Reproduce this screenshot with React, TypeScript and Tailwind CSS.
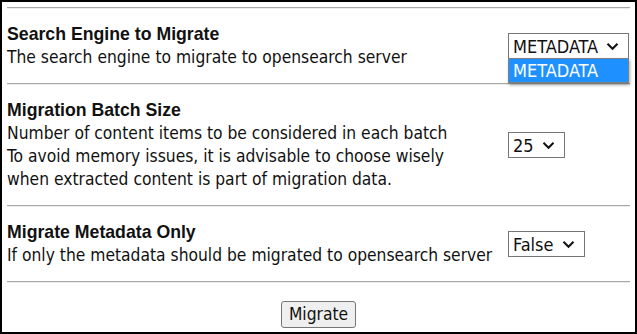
import React from 'react';

const body = "font-['DejaVu_Sans_Condensed','DejaVu_Sans',sans-serif]";
const head = "font-['Liberation_Sans',Arial,sans-serif]";

function Rule() {
  return <div className="h-[2px] border-t border-[#a8a8a8] border-b border-b-[#ececec]" />;
}

function Chevron() {
  return (
    <svg width="13" height="9" viewBox="0 0 13 9" className="ml-[8px] shrink-0">
      <path d="M1.5 1.8 L6.5 6.8 L11.5 1.8" fill="none" stroke="#111" strokeWidth="2" />
    </svg>
  );
}

function FakeSelect({ value, open }: { value: string; open?: boolean }) {
  return (
    <div className="relative inline-block">
      <div className={`flex items-center h-[26px] border border-[#767676] bg-white pl-[4px] pr-[9px] text-[18px] text-[#111] ${body}`}>
        <span>{value}</span>
        <Chevron />
      </div>
      {open && (
        <div className="absolute left-0 right-0 top-[25px] border border-[#808080] bg-white shadow-[1px_2px_3px_rgba(0,0,0,0.35)]">
          <div className={`h-[23px] leading-[23px] bg-[#1e90ff] text-white pl-[4px] text-[18px] ${body}`}>{value}</div>
        </div>
      )}
    </div>
  );
}

function Row({ title, lines, control }: { title: string; lines: string[]; control: React.ReactNode }) {
  return (
    <div className="grid grid-cols-[501px_1fr] items-center py-[14px]">
      <div className="leading-[23px] text-[#111]">
        <div className={`${head} font-bold text-[17.7px]`}>{title}</div>
        {lines.map((l) => (
          <div key={l} className={`${body} text-[17.3px]`}>{l}</div>
        ))}
      </div>
      <div>{control}</div>
    </div>
  );
}

export default function App() {
  return (
    <div className="w-[637px] h-[334px] bg-white border-2 border-black px-[5px] pt-[5px] overflow-hidden">
      <Rule />
      <div className="relative z-10">
        <Row
          title="Search Engine to Migrate"
          lines={['The search engine to migrate to opensearch server']}
          control={<FakeSelect value="METADATA" open />}
        />
      </div>
      <Rule />
      <Row
        title="Migration Batch Size"
        lines={[
          'Number of content items to be considered in each batch',
          'To avoid memory issues, it is advisable to choose wisely',
          'when extracted content is part of migration data.',
        ]}
        control={<FakeSelect value="25" />}
      />
      <Rule />
      <Row
        title="Migrate Metadata Only"
        lines={['If only the metadata should be migrated to opensearch server']}
        control={<FakeSelect value="False" />}
      />
      <Rule />
      <div className="flex justify-center pt-[18px]">
        <button className={`h-[27px] px-[7px] rounded-[3px] border border-[#767676] bg-[#efefef] text-[17.3px] text-[#111] ${body}`}>
          Migrate
        </button>
      </div>
    </div>
  );
}
